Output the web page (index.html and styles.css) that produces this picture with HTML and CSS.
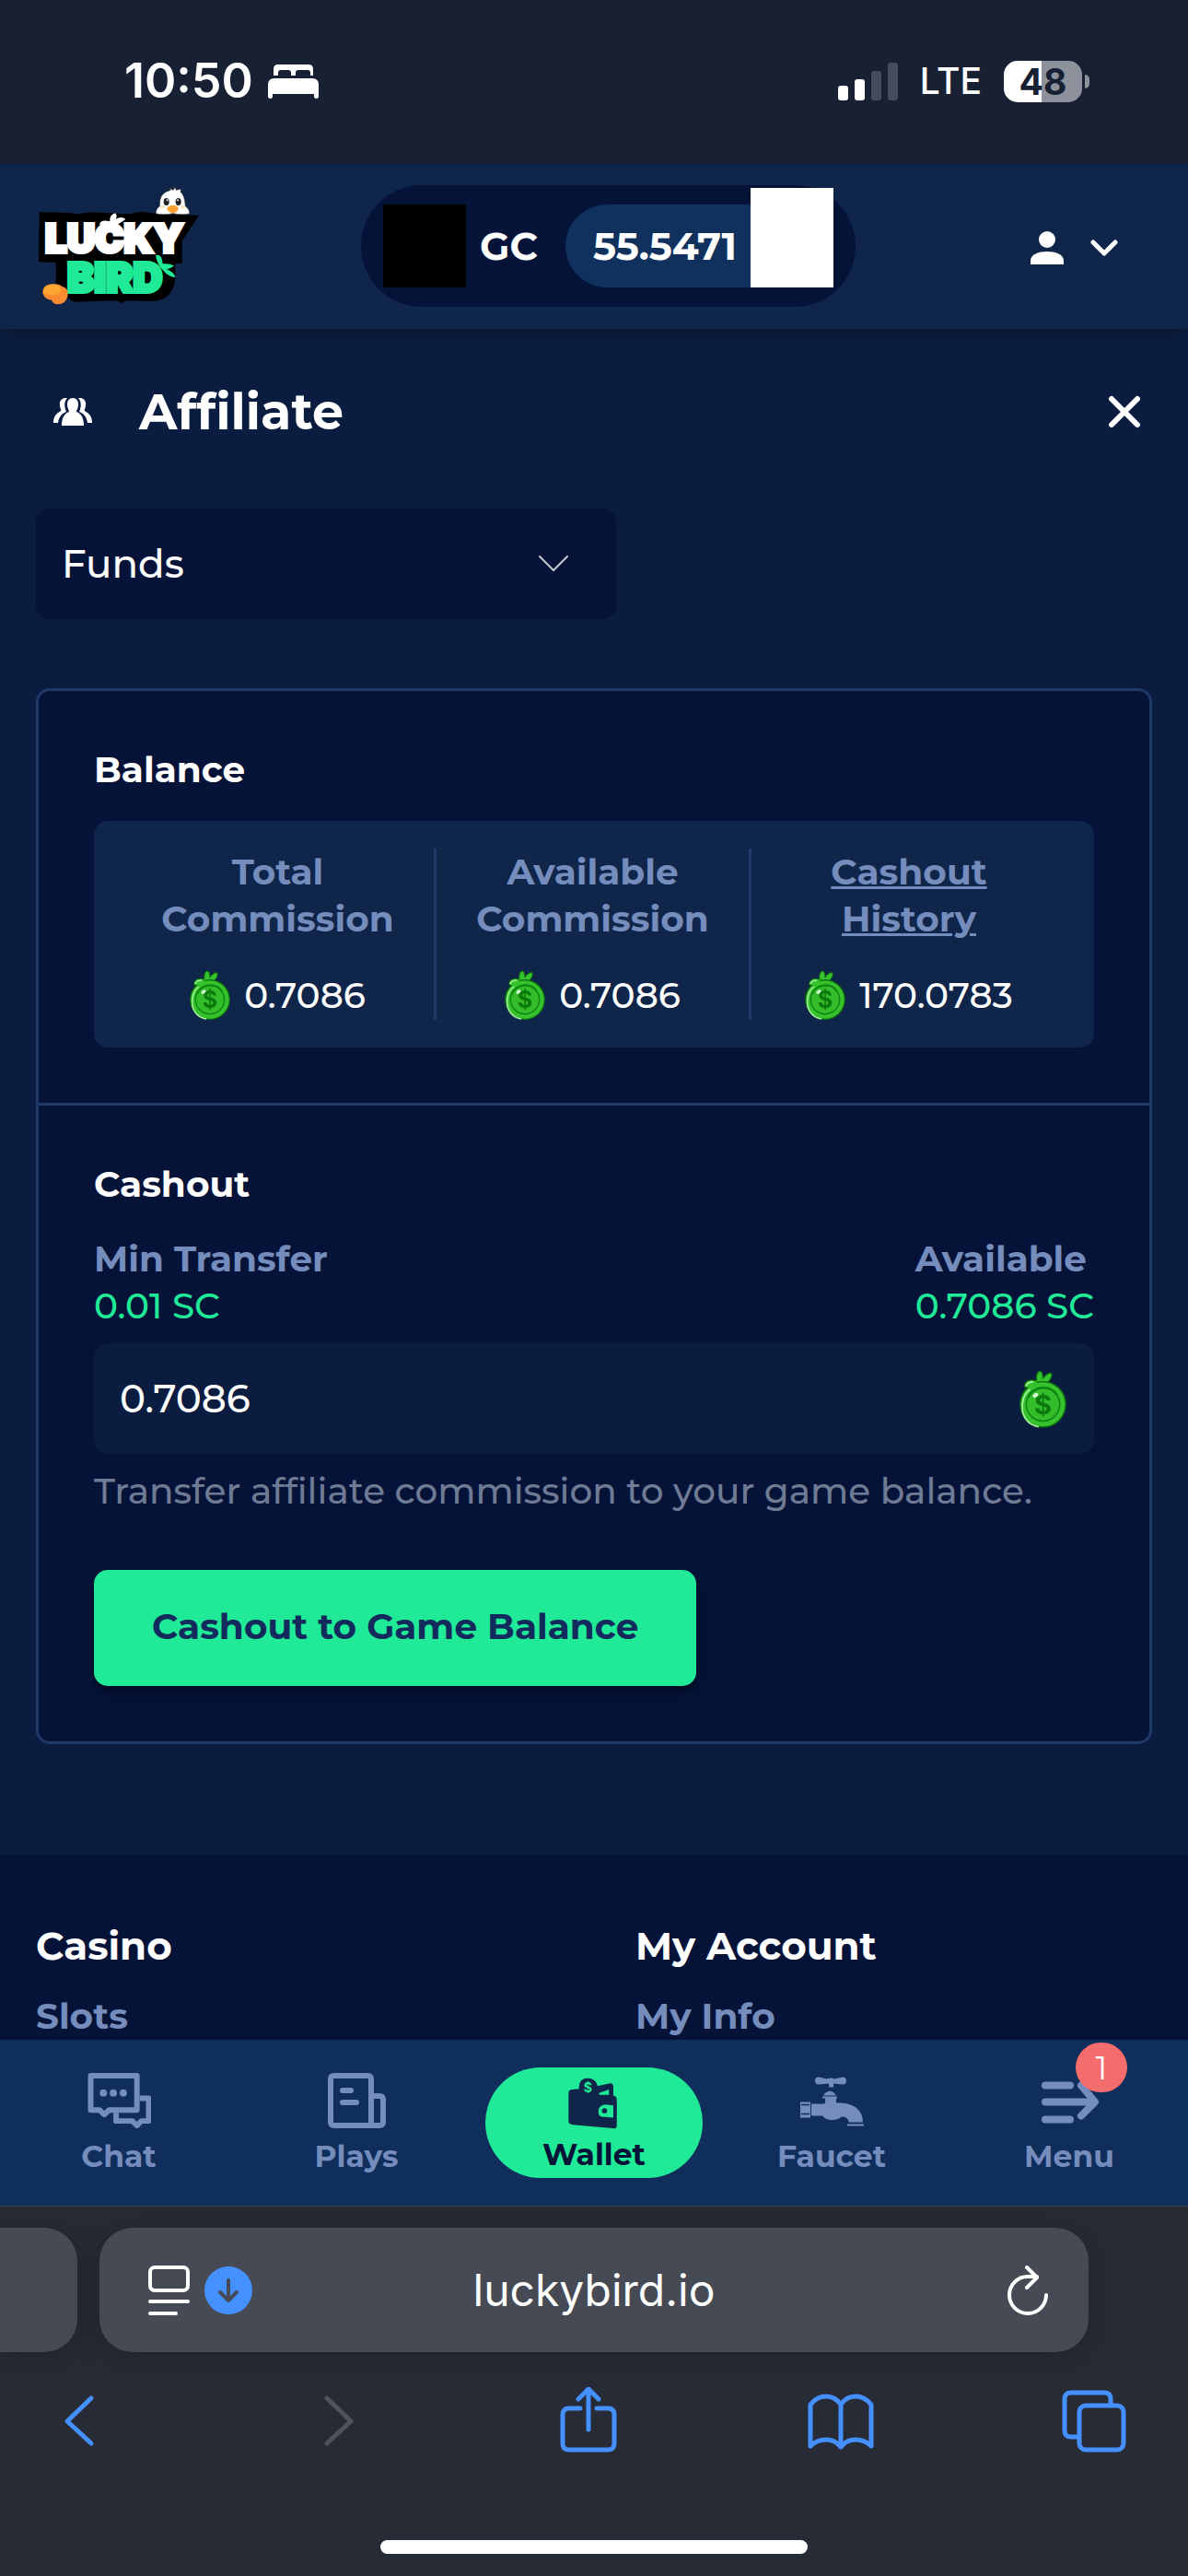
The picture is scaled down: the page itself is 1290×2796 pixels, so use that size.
FILE: index.html
```html
<!DOCTYPE html>
<html lang="en">
<head>
<meta charset="utf-8">
<meta name="viewport" content="width=device-width, initial-scale=1">
<title>Affiliate - luckybird.io</title>
<link rel="stylesheet" href="styles.css">
</head>
<body>
<svg class="sprite" aria-hidden="true">
  <symbol id="bag" viewBox="0 0 44 54">
    <path d="M5 16C4 10 10 8 16 10C15 5 17 1 19 1C21 1 22 4 22 8C24 4 28 2 30 3C31 6 29 9 26 12L24 16Z" fill="#36c22c" stroke="#0b6a0c" stroke-width="1"/>
    <circle cx="22" cy="32" r="21.3" fill="#36c22c" stroke="#0b6a0c" stroke-width="1.2"/>
    <path d="M5 15C7 10 12 9 17 12L20 15L12 18Z" fill="#36c22c"/>
    <path d="M6 15C7 12 10 11 13 11M18 53C7 51 1 42 3 30C4 24 7 20 10 18" fill="none" stroke="#a5efa0" stroke-width="1.5"/>
    <circle cx="22" cy="32" r="15.7" fill="#33bd2a" stroke="#0e8510" stroke-width="1.4"/>
    <path d="M8 26C12 15 29 13 35 23" fill="none" stroke="#0e8510" stroke-width="2"/>
    <text x="22" y="41" text-anchor="middle" class="bag-sign">$</text>
    <ellipse cx="15" cy="23.500" rx="2.800" ry="1.800" fill="#d5fbd2" transform="rotate(-38 15 23.5)"/>
  </symbol>
</svg>

<div class="status">
  <span class="time">10:50</span>
  <svg class="bed" viewBox="0 0 55 38" fill="#fff"><path d="M6 13V6Q6 1 11 1H44Q49 1 49 6V13H46V10Q46 7 43 7H33Q30 7 30 10V13H25V10Q25 7 22 7H14Q11 7 11 10V13Z"/><path d="M0 36V23Q0 16 7 16H48Q55 16 55 23V36Q55 38 52.500 38T50 36V33H5V36Q5 38 2.500 38T0 36Z"/></svg>
  <div class="status-right">
    <svg class="signal" viewBox="0 0 65 42"><g fill="#fff"><rect y="26" width="11" height="16" rx="3"/><rect x="18" y="19" width="11" height="23" rx="3"/></g><g fill="#454d5c"><rect x="36" y="10" width="11" height="32" rx="3"/><rect x="54" y="1" width="11" height="41" rx="3"/></g></svg>
    <span class="lte">LTE</span>
    <span class="battery">48</span>
    <span class="battery-tip"></span>
  </div>
</div>

<header class="header">
  <a class="logo" href="#" aria-label="Lucky Bird">
    <svg viewBox="36 36 522 384">
      <path d="M38 118L140 120L165 124L200 118L330 124L370 116L430 124L558 128L503 212V284L480 286L482 320Q480 410 395 408L320 406L305 414L290 406L150 410L92 370V282L36 280Z" fill="#000"/>
      <path d="M417 122Q418 106 430 98Q428 62 452 51L466 46L462 40L475 46L480 35L484 46L500 42L498 52Q512 62 514 98Q528 108 528 122Q510 129 474 122Q440 129 417 122Z" fill="#fff" stroke="#222" stroke-width="2"/>
      <ellipse cx="452" cy="84" rx="9" ry="12" fill="#222"/><ellipse cx="491" cy="84" rx="9" ry="12" fill="#222"/>
      <circle cx="455" cy="79" r="3" fill="#fff"/><circle cx="489" cy="79" r="3" fill="#fff"/>
      <ellipse cx="440" cy="101" rx="8" ry="5" fill="#f8e5b5"/><ellipse cx="506" cy="101" rx="8" ry="5" fill="#f8e5b5"/>
      <path d="M453 106Q460 95 473 95Q488 95 492 106Q486 121 472 121Q459 120 453 106Z" fill="#ffa133"/>
      <text x="282" y="250" text-anchor="middle" class="logo-word logo-lucky">LUCKY</text>
      <text x="284" y="378" text-anchor="middle" class="logo-word logo-bird">BIRD</text>
      <path d="M234 158Q238 140 268 148Q266 126 286 121Q294 132 286 140Q306 130 319 140Q306 152 282 162Z" fill="#fff"/>
      <path d="M417 258Q438 252 440 286Q462 284 477 292Q466 303 452 303Q476 312 482 330Q460 330 440 306Q422 290 417 258Z" fill="#20e997"/>
      <path d="M50 384Q46 354 80 352Q104 350 112 360Q134 364 131 390Q124 418 98 418Q82 416 78 404Q56 402 50 384Z" fill="#f98c31"/>
      <path d="M50 380Q50 354 82 353Q110 354 108 374Q98 392 72 386Q60 382 50 380Z" fill="#fda632"/>
    </svg>
  </a>
  <div class="wallet">
    <span class="coin-dark"></span>
    <span class="currency">GC</span>
    <span class="amount">55.5471</span>
    <span class="coin-light"></span>
  </div>
  <button class="user" type="button" aria-label="Account">
    <svg class="i-user" viewBox="0 0 36 36" fill="#fff"><circle cx="18" cy="9" r="9"/><path d="M0 36V32C0 25 9 22 18 22S36 25 36 32V36Z"/></svg>
    <svg class="i-down" viewBox="0 0 30 18" fill="none" stroke="#fff" stroke-width="5" stroke-linecap="round" stroke-linejoin="round"><path d="M3 3L15 15L27 3"/></svg>
  </button>
</header>

<main class="page">
  <div class="title-row">
    <svg class="i-group" viewBox="0 0 42 30" fill="#fff"><path d="M15 .300C10 -.800 6 3 7 8C7 12 9 12 8 14C3 17 0 20 0 27H5C6 20 9 17 14 15C12 10 11 4 15 .300ZM27 .300C32 -.800 36 3 35 8C35 12 33 12 34 14C39 17 42 20 42 27H37C36 20 33 17 28 15C30 10 31 4 27 .300Z"/><path d="M21 0C25 0 27 3 27 7C27 11 25 13 25 15C30 17 33 21 33 30H9C9 21 12 17 17 15C17 13 15 11 15 7C15 3 17 0 21 0Z"/></svg>
    <h1>Affiliate</h1>
    <button class="close" type="button" aria-label="Close"><svg viewBox="0 0 36 36" fill="none" stroke="#fff" stroke-width="6" stroke-linecap="round"><path d="M4 4L32 32M32 4L4 32"/></svg></button>
  </div>

  <div class="select">
    <select aria-label="Section"><option>Funds</option></select>
    <svg viewBox="0 0 32 18" fill="none" stroke="#c3c7d1" stroke-width="2" stroke-linecap="round"><path d="M1 1L16 16L31 1"/></svg>
  </div>

  <div class="card">
    <section>
      <h2>Balance</h2>
      <div class="stats">
        <div class="stat"><span class="muted">Total Commission</span><span class="value"><svg class="bag"><use href="#bag"/></svg>0.7086</span></div>
        <div class="stat"><span class="muted">Available Commission</span><span class="value"><svg class="bag"><use href="#bag"/></svg>0.7086</span></div>
        <div class="stat"><a class="muted" href="#">Cashout History</a><span class="value"><svg class="bag"><use href="#bag"/></svg>170.0783</span></div>
      </div>
    </section>
    <section>
      <h2>Cashout</h2>
      <div class="limits">
        <div><label class="muted" for="amount">Min Transfer</label><span class="sc">0.01 SC</span></div>
        <div><span class="muted">Available</span><span class="sc">0.7086 SC</span></div>
      </div>
      <div class="field"><input id="amount" type="text" value="0.7086"><svg class="bag-large"><use href="#bag"/></svg></div>
      <p class="hint">Transfer affiliate commission to your game balance.</p>
      <button class="cashout" type="button">Cashout to Game Balance</button>
    </section>
  </div>

  <footer class="footer">
    <div><h3>Casino</h3><a href="#">Slots</a></div>
    <div><h3>My Account</h3><a href="#">My Info</a></div>
  </footer>
</main>

<nav class="nav">
  <a href="#"><svg viewBox="-1 -1 70 62" fill="none" stroke="#758dbd" stroke-width="6" stroke-linejoin="round"><path d="M3 3H54V41H23L18 46L13 41H3Z"/><path d="M57 28H67V53H59L54 58L49 53H31V44"/><g fill="#758dbd" stroke="none"><circle cx="17" cy="22" r="4"/><circle cx="28" cy="22" r="4"/><circle cx="39" cy="22" r="4"/></g></svg>Chat</a>
  <a href="#"><svg viewBox="-4 -1 70 61" fill="none" stroke="#758dbd" stroke-width="6" stroke-linecap="round"><path d="M47 57H7Q3 57 3 53V7Q3 3 7 3H43Q47 3 47 7V57H56Q60 57 60 53V29Q60 25 56 25H47"/><path d="M16 19H25M16 32H31"/></svg>Plays</a>
  <a class="active" href="#"><svg viewBox="-6 -6 70 64" fill="#10254a"><path d="M0 17Q0 13 4 13L12 12Q11 0 22 0Q31 0 33 9L46 6Q51 5 51 10V20Q55 20 55 25V54Q55 58 50 57L5 53Q0 52 0 49Z"/><g fill="#20e997"><path d="M34 17L46 13V19ZM35 17H46V19H35Z"/><path d="M51 31L42 30Q34 31 34 38T42 44L51 45Z"/><text x="22" y="16" text-anchor="middle" class="wallet-sign">$</text></g><circle cx="41" cy="37" r="3"/></svg>Wallet</a>
  <a href="#"><svg viewBox="-1 -5 70 60" fill="#758dbd"><path d="M16 4Q16 0 20 0L29 2Q33 0 37 2L46 0Q50 0 50 4T46 8L36 7V11H31V7L20 8Q16 8 16 4ZM32 15Q37 16 39 20H25Q27 16 32 15ZM24 21H40V23H39V28C58 27 68 36 68 49H53Q51 42 45 43Q40 47 33 46.500Q27 46 24 42H12V29H25Q28 29 27 23H24ZM0 27H11V44H0ZM51 51H69V53H51Z"/><path d="M1 30H10M1 40H10" stroke="#102e5c" stroke-width="1.500"/></svg>Faucet</a>
  <a href="#"><span class="menu-icon"><svg viewBox="-5 -10 70 60" fill="none" stroke="#758dbd" stroke-width="8" stroke-linecap="round" stroke-linejoin="round"><path d="M4 4H31M4 41H31M4 22H56M43 4L58 22L43 37"/></svg><span class="badge">1</span></span>Menu</a>
</nav>

<div class="browser">
  <div class="tabs">
    <div class="tab-prev"></div>
    <div class="address">
      <span class="address-icons">
        <svg class="i-reader" viewBox="0 0 45 54" fill="none" stroke="#fff" stroke-width="4" stroke-linecap="round"><rect x="2" y="2" width="41" height="25" rx="5"/><path d="M2 39H43M2 52H30"/></svg>
        <svg class="i-download" viewBox="0 0 52 52" fill="none" stroke="#444a56" stroke-width="4" stroke-linecap="round" stroke-linejoin="round"><circle cx="26" cy="26" r="26" fill="#4590ff" stroke="none"/><path d="M26 15V37M17 28L26 37L35 28"/></svg>
      </span>
      <span>luckybird.io</span>
      <button class="reload" type="button" aria-label="Reload"><svg viewBox="0 0 44 54" fill="none" stroke="#fff" stroke-width="4" stroke-linecap="round" stroke-linejoin="round"><path d="M42 32A20 20 0 1 1 22 12H32M21 2L32 13L21 24"/></svg></button>
    </div>
  </div>
  <div class="toolbar">
    <button type="button" aria-label="Back"><svg viewBox="0 0 72 72"><path d="M49 12L23 37L49 61"/></svg></button>
    <button type="button" aria-label="Forward" disabled><svg viewBox="0 0 72 72"><path d="M29 12L55 37L29 61"/></svg></button>
    <button type="button" aria-label="Share"><svg viewBox="0 0 72 72"><path d="M29 23H17Q10 23 10 30V61Q10 68 17 68H59Q66 68 66 61V30Q66 23 59 23H47M38 46V2M27 13L38 2L49 13"/></svg></button>
    <button type="button" aria-label="Bookmarks"><svg viewBox="0 0 72 72"><path d="M3 64V19Q10 10 20 10T36 19Q42 10 52 10T69 19V64Q62 57 52 57T36 65Q30 57 20 57T3 64M36 19V65"/></svg></button>
    <button type="button" aria-label="Tabs"><svg viewBox="0 0 72 72"><path d="M17 54H11Q4 54 4 47V13Q4 6 11 6H47Q54 6 54 13V20"/><rect x="20" y="20" width="48" height="48" rx="7"/></svg></button>
  </div>
  <div class="home"></div>
</div>
</body>
</html>
```
FILE: styles.css
```css
* { box-sizing: border-box; }
body {
  margin: 0;
  height: 100vh;
  display: flex;
  flex-direction: column;
  background: #0a1d40;
  color: #fff;
  font: 500 39px/51px Montserrat, Inter, sans-serif;
}
h1, h2, h3, p { margin: 0; }
a { color: inherit; text-decoration: none; }
button { border: 0; padding: 0; background: none; color: inherit; font: inherit; }
svg { display: block; }
.sprite { display: none; }
.bag-sign { font: 700 25px Inter, sans-serif; fill: #0b7a0d; }

.status {
  flex: none;
  display: flex;
  align-items: center;
  gap: 16px;
  padding: 58px 107px 60px 135px;
  background: #172133;
  font-family: Inter, sans-serif;
  line-height: 60px;
  position: relative;
  z-index: 1;
}
.time { font-size: 52px; font-weight: 600; }
.bed { width: 55px; height: 38px; }
.status-right { display: flex; align-items: center; margin-left: auto; }
.signal { width: 65px; height: 42px; margin-right: 24px; }
.lte { font-size: 39px; margin-right: 24px; }
.battery {
  width: 85px;
  border-radius: 15px;
  background: linear-gradient(90deg, #fff 48%, #8c919c 48%);
  color: #172133;
  font-size: 39px;
  font-weight: 700;
  line-height: 45px;
  text-align: center;
}
.battery-tip { width: 5px; height: 15px; margin-left: 3px; border-radius: 0 8px 8px 0; background: #8c919c; }

.header {
  flex: none;
  display: flex;
  align-items: center;
  justify-content: space-between;
  padding: 23px 62px 24px 42px;
  background: #10254a;
  box-shadow: 0 3px 24px rgba(12, 22, 40, .8);
  position: relative;
}
.logo svg { width: 174px; height: 128px; }
.logo-word { font-family: Inter, sans-serif; font-weight: 900; stroke-width: 12; }
.logo-lucky { font-size: 126px; fill: #fff; stroke: #fff; }
.logo-bird { font-size: 132px; fill: #20e997; stroke: #20e997; }
.wallet {
  display: flex;
  align-items: flex-end;
  padding: 3px 24px 21px;
  border-radius: 66px;
  background: #051338;
  font-size: 42px;
  font-weight: 700;
  line-height: 90px;
}
.coin-dark { width: 90px; height: 90px; background: #000; }
.currency { width: 108px; padding-left: 15px; }
.amount { width: 201px; padding-left: 30px; border-radius: 45px 0 0 45px; background: #10305d; }
.coin-light { width: 90px; height: 108px; background: #fff; }
.user { display: flex; align-items: center; gap: 29px; margin-right: -14px; padding: 3px 28px 0 14px; }
.i-user { width: 36px; height: 36px; }
.i-down { width: 30px; height: 18px; }

.page { flex: 1; min-height: 0; overflow: hidden; padding-top: 54px; }
.title-row { display: flex; align-items: center; margin-bottom: 69px; padding: 0 51px 0 58px; }
.i-group { width: 42px; height: 30px; margin-right: 51px; }
h1 { font-size: 54px; line-height: 72px; font-weight: 700; }
.close { margin-left: auto; }
.close svg { width: 36px; height: 36px; }

.select { position: relative; width: 49%; max-width: 630px; margin: 0 39px 75px; }
.select select {
  width: 100%;
  height: 120px;
  padding: 0 28px;
  border: 0;
  border-radius: 15px;
  appearance: none;
  background: #051338;
  color: #fff;
  font: inherit;
  font-size: 42px;
}
.select svg { position: absolute; right: 52px; top: 51px; width: 32px; height: 18px; pointer-events: none; }

.card { margin: 0 39px 120px; border: 3px solid #1f3a68; border-radius: 15px; background: #051338; }
.card section { padding: 60px; }
.card section + section { border-top: 3px solid #1f3a68; }
h2 { margin-bottom: 30px; font-size: 39px; line-height: 51px; font-weight: 700; }
.muted { color: #758dbd; font-weight: 700; }
.stats { display: grid; grid-template-columns: repeat(3, 1fr); padding: 30px; border-radius: 15px; background: #10254a; }
.stat { display: flex; flex-direction: column; align-items: center; gap: 30px; text-align: center; }
.stat .muted { width: min-content; }
.stat:not(:last-child) { border-right: 3px solid #1f3a68; }
.stat a { text-decoration: underline; text-decoration-thickness: 3px; }
.value { display: flex; align-items: center; gap: 15px; }
.bag { width: 44px; height: 54px; }
.bag-large { width: 51px; height: 63px; }
.limits { display: flex; justify-content: space-between; margin-bottom: 15px; }
.limits div { display: flex; flex-direction: column; }
.sc { color: #20e997; }
.field { display: flex; align-items: center; height: 120px; padding: 0 30px 0 28px; border-radius: 15px; background: #0a1d40; }
.field input { flex: 1; min-width: 0; padding: 0; border: 0; background: none; color: #fff; font: inherit; font-size: 42px; }
.hint { margin: 15px 0 60px; color: #6f7b94; }
.cashout {
  height: 126px;
  padding: 0 63px 4px;
  border-radius: 15px;
  background: #20e997;
  box-shadow: 0 6px 12px rgba(0, 0, 0, .4);
  color: #122a5c;
  font-weight: 700;
}
.footer { display: grid; grid-template-columns: 651px 1fr; padding: 74px 39px; background: #051338; }
h3 { margin-bottom: 25px; font-size: 42px; line-height: 51px; font-weight: 700; }
.footer a { color: #758dbd; font-weight: 700; }

.nav {
  flex: none;
  display: grid;
  grid-template-columns: repeat(5, 1fr);
  align-items: center;
  height: 180px;
  background: #102e5c;
  color: #758dbd;
  font-size: 33px;
  line-height: 39px;
  font-weight: 700;
  position: relative;
}
.nav a { display: flex; flex-direction: column; align-items: center; gap: 11px; }
.nav svg { width: 70px; height: 61px; }
.nav .active { gap: 8px; margin: 0 11px; padding: 6px 0; border-radius: 60px; background: #20e997; color: #051338; }
.wallet-sign { font: 700 15px Inter, sans-serif; }
.menu-icon { position: relative; }
.badge {
  position: absolute;
  right: -28px;
  top: -32px;
  width: 56px;
  border-radius: 28px;
  background: #f56c6c;
  color: #fff;
  font-size: 36px;
  font-weight: 400;
  line-height: 54px;
  text-align: center;
}

.browser { flex: none; padding: 23px 0 24px; border-top: 1px solid #404043; background: #272b35; font-family: Inter, sans-serif; }
.tabs { display: flex; gap: 24px; height: 135px; padding-right: 108px; }
.tab-prev { width: 84px; border-radius: 0 36px 36px 0; background: #464a54; box-shadow: 0 6px 36px rgba(0, 0, 0, .2); }
.address {
  flex: 1;
  display: grid;
  grid-template-columns: 1fr auto 1fr;
  align-items: center;
  padding: 0 44px;
  border-radius: 36px;
  background: #464a54;
  box-shadow: 0 6px 36px rgba(0, 0, 0, .2);
  font-size: 48px;
  font-weight: 400;
}
.address-icons { display: flex; align-items: center; gap: 16px; padding-left: 9px; }
.i-reader { width: 45px; height: 54px; }
.i-download { width: 52px; height: 52px; }
.reload { justify-self: end; }
.reload svg { width: 44px; height: 54px; }
.toolbar { display: flex; justify-content: space-between; padding: 38px 66px 94px 50px; }
.toolbar svg { width: 72px; height: 72px; fill: none; stroke: #4590ff; stroke-width: 5; stroke-linecap: round; stroke-linejoin: round; }
.toolbar button:disabled svg { stroke: #50535b; }
.home { width: 36%; height: 15px; margin: 0 auto; border-radius: 8px; background: #fff; }
```
